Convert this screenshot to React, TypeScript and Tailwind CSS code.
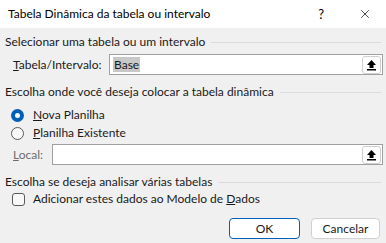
import { X } from "lucide-react";

function Fieldset({ title }: { title: string }) {
  return (
    <div className="flex h-[16px] items-center gap-[6px] pl-[5px] pr-[5px]">
      <span className="whitespace-nowrap">{title}</span>
      <div className="h-px flex-1 bg-[#dcdcdc]" />
    </div>
  );
}

function UploadButton() {
  return (
    <div className="flex h-[18px] w-[19px] items-center justify-center rounded-[3px] border border-[#d0d0d0] bg-white">
      <svg width="11" height="12" viewBox="0 0 11 12">
        <path d="M5.5 1 L1 6 H3.5 V9 H7.5 V6 H10 Z" fill="#000" />
        <rect x="1" y="10" width="9" height="1.5" fill="#000" />
      </svg>
    </div>
  );
}

function RangeInput({ value, className }: { value?: string; className?: string }) {
  return (
    <div
      className={`flex h-[21px] items-center justify-between border border-[#a0a0a0] bg-white pl-[3px] pr-[1px] ${className ?? ""}`}
    >
      {value ? (
        <span className="bg-[#c8c8c8] px-px leading-[15px]">{value}</span>
      ) : (
        <span />
      )}
      <UploadButton />
    </div>
  );
}

export default function App() {
  return (
    <div
      className="h-[243px] w-[386px] overflow-hidden bg-[#f0f0f0] text-[12px] leading-none text-[#1a1a1a]"
      style={{ fontFamily: '"Segoe UI", Lato, sans-serif' }}
    >
      {/* Title bar */}
      <div className="flex h-[28px] items-center justify-between bg-white pl-[8px] pr-[14px]">
        <span className="text-[12px] text-black">Tabela Dinâmica da tabela ou intervalo</span>
        <div className="flex items-center gap-[34px]">
          <span className="text-[13px] text-black">?</span>
          <X size={14} strokeWidth={1.2} color="#000" />
        </div>
      </div>

      <div className="flex flex-col pt-[6px]">
        <Fieldset title="Selecionar uma tabela ou um intervalo" />
        <div className="mt-[4px] flex items-center pl-[13px] pr-[3px]">
          <span className="w-[96px]">
            <u>T</u>abela/Intervalo:
          </span>
          <RangeInput value="Base" className="flex-1" />
        </div>

        <div className="mt-[9px]">
          <Fieldset title="Escolha onde você deseja colocar a tabela dinâmica" />
        </div>

        <div className="mt-[6px] flex h-[18px] items-center gap-[9px] pl-[11px]">
          <div className="flex h-[13px] w-[13px] items-center justify-center rounded-full bg-[#005fb8]">
            <div className="h-[5px] w-[5px] rounded-full bg-white" />
          </div>
          <span>
            <u>N</u>ova Planilha
          </span>
        </div>
        <div className="flex h-[18px] items-center gap-[9px] pl-[11px]">
          <div className="h-[13px] w-[13px] rounded-full border border-[#5a5a5a] bg-[#f8f8f8]" />
          <span>
            <u>P</u>lanilha Existente
          </span>
        </div>

        <div className="mt-[2px] flex items-center pl-[13px] pr-[3px]">
          <span className="w-[39px] text-[#6d6d6d]">
            <u>L</u>ocal:
          </span>
          <RangeInput className="flex-1" />
        </div>

        <div className="mt-[9px]">
          <Fieldset title="Escolha se deseja analisar várias tabelas" />
        </div>

        <div className="flex h-[18px] items-center gap-[8px] pl-[12px]">
          <div className="h-[13px] w-[13px] rounded-[3px] border border-[#5a5a5a] bg-[#f8f8f8]" />
          <span>
            Adicionar estes dados ao Modelo de <u>D</u>ados
          </span>
        </div>

        <div className="mt-[10px] flex justify-end gap-[11px] pr-[6px]">
          <button className="h-[21px] w-[71px] rounded-[4px] border border-[#005fb8] bg-white text-[12px] leading-none">
            OK
          </button>
          <button className="h-[21px] w-[69px] rounded-[4px] border border-[#d0d0d0] bg-white text-[12px] leading-none">
            Cancelar
          </button>
        </div>
      </div>
    </div>
  );
}
